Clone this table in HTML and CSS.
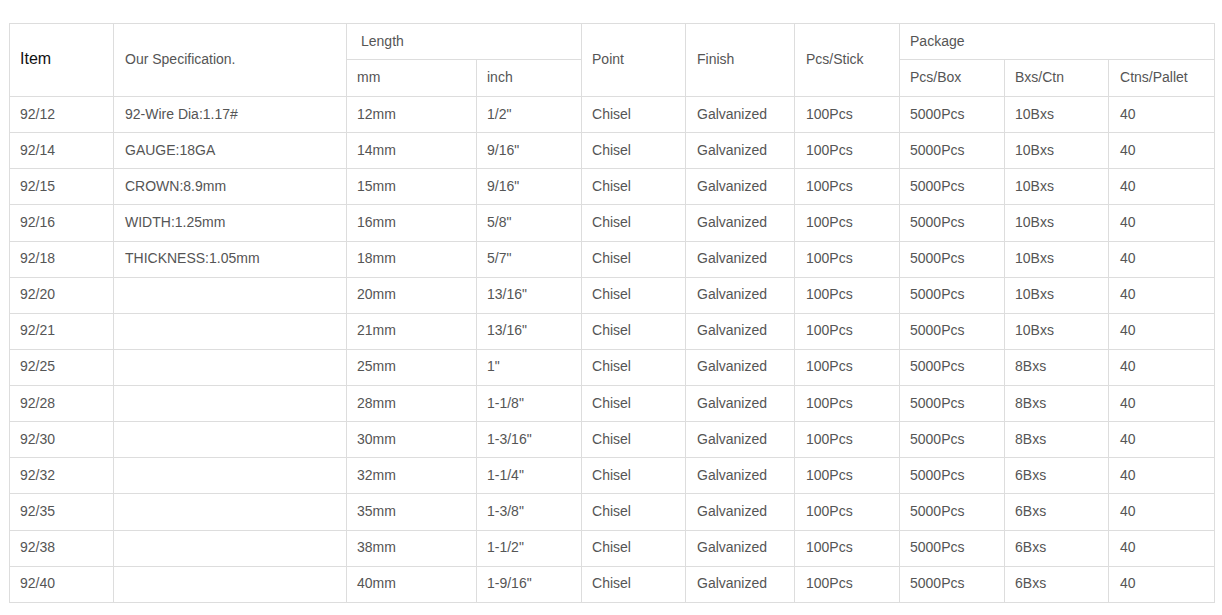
FILE: index.html
```html
<!DOCTYPE html>
<html>
<head>
<meta charset="utf-8">
<link rel="stylesheet" href="styles.css">
</head>
<body>
<div class="wrap">
<table class="spec">
<colgroup>
<col class="c1"><col class="c2"><col class="c3"><col class="c4"><col class="c5"><col class="c6"><col class="c7"><col class="c8"><col class="c9"><col class="c10">
</colgroup>
<thead>
<tr class="h1">
<td rowspan="2" class="item">Item</td>
<td rowspan="2" class="wide">Our Specification.</td>
<td colspan="2" class="indent">Length</td>
<td rowspan="2">Point</td>
<td rowspan="2" class="wide">Finish</td>
<td rowspan="2" class="wide">Pcs/Stick</td>
<td colspan="3">Package</td>
</tr>
<tr class="h2">
<td>mm</td><td>inch</td><td>Pcs/Box</td><td>Bxs/Ctn</td><td class="wide">Ctns/Pallet</td>
</tr>
</thead>
<tbody>
<tr><td>92/12</td><td class="wide">92-Wire Dia:1.17#</td><td>12mm</td><td>1/2"</td><td>Chisel</td><td class="wide">Galvanized</td><td class="wide">100Pcs</td><td>5000Pcs</td><td>10Bxs</td><td class="wide">40</td></tr>
<tr><td>92/14</td><td class="wide">GAUGE:18GA</td><td>14mm</td><td>9/16"</td><td>Chisel</td><td class="wide">Galvanized</td><td class="wide">100Pcs</td><td>5000Pcs</td><td>10Bxs</td><td class="wide">40</td></tr>
<tr><td>92/15</td><td class="wide">CROWN:8.9mm</td><td>15mm</td><td>9/16"</td><td>Chisel</td><td class="wide">Galvanized</td><td class="wide">100Pcs</td><td>5000Pcs</td><td>10Bxs</td><td class="wide">40</td></tr>
<tr><td>92/16</td><td class="wide">WIDTH:1.25mm</td><td>16mm</td><td>5/8"</td><td>Chisel</td><td class="wide">Galvanized</td><td class="wide">100Pcs</td><td>5000Pcs</td><td>10Bxs</td><td class="wide">40</td></tr>
<tr><td>92/18</td><td class="wide">THICKNESS:1.05mm</td><td>18mm</td><td>5/7"</td><td>Chisel</td><td class="wide">Galvanized</td><td class="wide">100Pcs</td><td>5000Pcs</td><td>10Bxs</td><td class="wide">40</td></tr>
<tr><td>92/20</td><td class="wide"></td><td>20mm</td><td>13/16"</td><td>Chisel</td><td class="wide">Galvanized</td><td class="wide">100Pcs</td><td>5000Pcs</td><td>10Bxs</td><td class="wide">40</td></tr>
<tr><td>92/21</td><td class="wide"></td><td>21mm</td><td>13/16"</td><td>Chisel</td><td class="wide">Galvanized</td><td class="wide">100Pcs</td><td>5000Pcs</td><td>10Bxs</td><td class="wide">40</td></tr>
<tr><td>92/25</td><td class="wide"></td><td>25mm</td><td>1"</td><td>Chisel</td><td class="wide">Galvanized</td><td class="wide">100Pcs</td><td>5000Pcs</td><td>8Bxs</td><td class="wide">40</td></tr>
<tr><td>92/28</td><td class="wide"></td><td>28mm</td><td>1-1/8"</td><td>Chisel</td><td class="wide">Galvanized</td><td class="wide">100Pcs</td><td>5000Pcs</td><td>8Bxs</td><td class="wide">40</td></tr>
<tr><td>92/30</td><td class="wide"></td><td>30mm</td><td>1-3/16"</td><td>Chisel</td><td class="wide">Galvanized</td><td class="wide">100Pcs</td><td>5000Pcs</td><td>8Bxs</td><td class="wide">40</td></tr>
<tr><td>92/32</td><td class="wide"></td><td>32mm</td><td>1-1/4"</td><td>Chisel</td><td class="wide">Galvanized</td><td class="wide">100Pcs</td><td>5000Pcs</td><td>6Bxs</td><td class="wide">40</td></tr>
<tr><td>92/35</td><td class="wide"></td><td>35mm</td><td>1-3/8"</td><td>Chisel</td><td class="wide">Galvanized</td><td class="wide">100Pcs</td><td>5000Pcs</td><td>6Bxs</td><td class="wide">40</td></tr>
<tr><td>92/38</td><td class="wide"></td><td>38mm</td><td>1-1/2"</td><td>Chisel</td><td class="wide">Galvanized</td><td class="wide">100Pcs</td><td>5000Pcs</td><td>6Bxs</td><td class="wide">40</td></tr>
<tr><td>92/40</td><td class="wide"></td><td>40mm</td><td>1-9/16"</td><td>Chisel</td><td class="wide">Galvanized</td><td class="wide">100Pcs</td><td>5000Pcs</td><td>6Bxs</td><td class="wide">40</td></tr>
</tbody>
</table>
</div>
</body>
</html>
```
FILE: styles.css
```css
html, body {
  margin: 0;
  padding: 0;
  background: #fff;
}
.wrap {
  padding: 23px 0 0 9px;
}
.spec {
  border-collapse: collapse;
  table-layout: fixed;
  width: 1206px;
  font-family: "Liberation Sans", Arial, sans-serif;
  font-size: 14px;
  line-height: 20px;
  color: #555;
}
.spec td {
  border: 1px solid #ddd;
  padding: 0 10px 2px 10px;
  vertical-align: middle;
  text-align: left;
  white-space: nowrap;
}
.spec td.wide {
  padding-left: 11px;
}
.c1 { width: 104px; }
.c2 { width: 233px; }
.c3 { width: 130px; }
.c4 { width: 105px; }
.c5 { width: 104px; }
.c6 { width: 109px; }
.c7 { width: 105px; }
.c8 { width: 105px; }
.c9 { width: 104px; }
.c10 { width: 106px; }
.spec .h1 { height: 36px; }
.spec .h2 { height: 37px; }
.spec tbody tr { height: 36.14px; }
.spec .item {
  font-size: 16px;
  color: #111;
}
.spec td.indent {
  padding-left: 14px;
}
```
